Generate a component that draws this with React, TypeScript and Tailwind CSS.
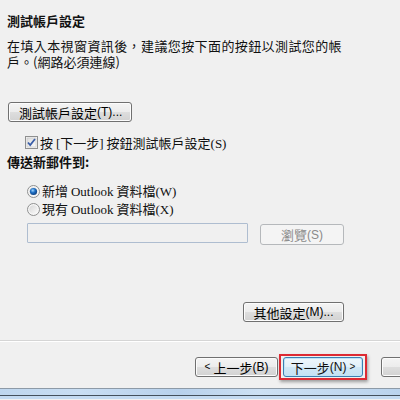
import React from 'react';

const serif = "font-['Liberation_Serif','Noto_Sans_CJK_TC',serif]";
const sans = "font-['Liberation_Sans',sans-serif]";

function CheckBox() {
  return (
    <svg width="13" height="13" viewBox="0 0 13 13" className="shrink-0">
      <defs>
        <linearGradient id="cbg" x1="0" y1="0" x2="1" y2="1">
          <stop offset="0" stopColor="#dcdcdc" />
          <stop offset="1" stopColor="#fbfbfb" />
        </linearGradient>
      </defs>
      <rect x="0.5" y="0.5" width="12" height="12" fill="#f4f4f4" stroke="#8e8f8f" />
      <rect x="2" y="2" width="9" height="9" fill="url(#cbg)" stroke="#c4c4c4" strokeWidth="0.6" />
      <path d="M3 6.5 L5.2 9 L10 3" fill="none" stroke="#3a5ea8" strokeWidth="1.8" />
    </svg>
  );
}

function Radio({ checked }: { checked?: boolean }) {
  return (
    <svg width="13" height="13" viewBox="0 0 13 13" className="shrink-0">
      <defs>
        <radialGradient id="rdot" cx="0.4" cy="0.35" r="0.7">
          <stop offset="0" stopColor="#9fd6ff" />
          <stop offset="0.45" stopColor="#1f6fc4" />
          <stop offset="1" stopColor="#0c3a78" />
        </radialGradient>
        <linearGradient id="rbg" x1="0" y1="0" x2="1" y2="1">
          <stop offset="0" stopColor="#d6d6d6" />
          <stop offset="1" stopColor="#fbfbfb" />
        </linearGradient>
      </defs>
      <circle cx="6.5" cy="6.5" r="6" fill="#f6f6f6" stroke="#8e8f8f" />
      <circle cx="6.5" cy="6.5" r="4.3" fill="url(#rbg)" />
      {checked && <circle cx="6.5" cy="6.5" r="3.6" fill="url(#rdot)" />}
    </svg>
  );
}

function Button({ children, className = '' }: { children?: React.ReactNode; className?: string }) {
  return (
    <div
      className={`h-[20px] shrink-0 whitespace-nowrap flex items-center rounded-[3px] border border-[#707070] bg-[linear-gradient(#f4f4f4_0%,#ececec_50%,#dedede_50%,#d2d2d2_100%)] text-[13px] leading-none text-black shadow-[inset_0_0_0_1px_#fcfcfc] ${className}`}
    >
      {children}
    </div>
  );
}

export default function App() {
  return (
    <div className="w-[400px] h-[400px] overflow-hidden bg-[#f0f0f0] flex flex-col font-['Noto_Sans_CJK_TC','Liberation_Sans',sans-serif] text-[#111]">
      <div className="pl-[7px] pt-[13px] text-[13px] leading-[15px] font-bold">測試帳戶設定</div>

      <div className="pl-[7px] mt-[10px] text-[13px] leading-[16px] whitespace-nowrap">
        <div className="tracking-[0.4px]">在填入本視窗資訊後，建議您按下面的按鈕以測試您的帳</div>
        <div>戶。(網路必須連線)</div>
      </div>

      <Button className="mt-[32px] ml-[8px] w-[124px] pl-[10px]">
        測試帳戶設定<span className={`${sans} text-[12px]`}>(T)...</span>
      </Button>

      <div className="mt-[13px] ml-[25px] h-[15px] flex items-center gap-[2px] text-[13px] leading-[15px] whitespace-nowrap">
        <CheckBox />
        <span>
          按 <span className={serif}>[</span>下一步<span className={serif}>]</span> 按鈕測試帳戶設定
          <span className={serif}>(S)</span>
        </span>
      </div>

      <div className="mt-[4px] pl-[7px] text-[13px] leading-[15px] font-bold">傳送新郵件到:</div>

      <div className="mt-[13px] ml-[27px] flex flex-col text-[13px] whitespace-nowrap">
        <div className="h-[18px] flex items-center gap-[2px]">
          <Radio checked />
          <span>
            新增 <span className={serif}>Outlook</span> 資料檔<span className={serif}>(W)</span>
          </span>
        </div>
        <div className="h-[18px] flex items-center gap-[2px]">
          <Radio />
          <span>
            現有 <span className={serif}>Outlook</span> 資料檔<span className={serif}>(X)</span>
          </span>
        </div>
      </div>

      <div className="mt-[5px] ml-[27px] h-[22px] flex items-start">
        <div className="w-[221px] h-[20px] shrink-0 border border-[#aebdd0] rounded-[1px] bg-[#f0f0f0]" />
        <div className="mt-[1px] ml-[12px] w-[84px] h-[21px] shrink-0 flex items-center justify-center rounded-[3px] border border-[#b5b8bb] bg-[#f4f4f4] text-[13px] text-[#8a8a8a] whitespace-nowrap">
          瀏覽<span className={`${sans} text-[12px]`}>(S)</span>
        </div>
      </div>

      <Button className="mt-[57px] ml-[243px] w-[101px] justify-center">
        其他設定<span className={`${sans} text-[12px]`}>(M)...</span>
      </Button>

      <div className="mt-[18px] h-[2px] border-t border-[#d5d5d5] border-b border-b-white" />

      <div className="mt-[12px] h-[26px] pl-[195px] flex items-center">
        <Button className="w-[83px] justify-center">
          <span className={`${sans} text-[10px] mr-[3px]`}>&lt;</span>上一步
          <span className={`${sans} text-[12px]`}>(B)</span>
        </Button>
        <div className="ml-[1px] shrink-0 h-[26px] border-2 border-[#dd2a33] px-[2px] py-[1px] shadow-[1px_2px_3px_rgba(0,0,0,0.35)]">
          <div className="w-[80px] h-[20px] whitespace-nowrap flex items-center justify-center rounded-[3px] border border-[#3c7fb1] bg-[linear-gradient(#eef7fc_0%,#e2f0f9_50%,#d0e8f6_50%,#c5e1f3_100%)] text-[13px] leading-none shadow-[inset_0_0_0_1px_#bfe4f7]">
            下一步<span className={`${sans} text-[12px]`}>(N)</span>
            <span className={`${sans} text-[10px] ml-[3px]`}>&gt;</span>
          </div>
        </div>
        <Button className="ml-[14px] w-[60px]" />
      </div>

      <div className="mt-[8px] flex flex-col">
        <div className="h-[1px] bg-[#8d9aa7]" />
        <div className="h-[6px] bg-[linear-gradient(90deg,#bed6ee_0%,#c9def3_20%,#b8d1ec_45%,#cde1f4_65%,#bad3ed_100%)]" />
        <div className="h-[1px] bg-[#44505c]" />
        <div className="h-[3px] bg-[#c3daf1]" />
      </div>
    </div>
  );
}
